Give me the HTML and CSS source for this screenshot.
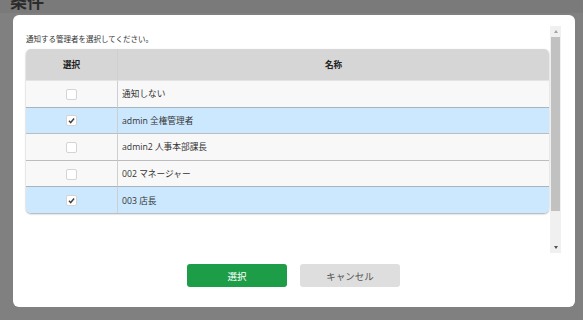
FILE: index.html
```html
<!DOCTYPE html>
<html>

<head>
    <title>通知先選択</title>
    <link rel="stylesheet" href="styles.css">
</head>

<body>
    <div class="page-header">
        <h2>条件</h2>
    </div>

    <div class="modal">
        <div class="scroll-area">
            <div class="scroll-content">
                <p class="lead">通知する管理者を選択してください。</p>
                <table class="admin-table">
                    <thead>
                        <tr>
                            <th class="col-check">選択</th>
                            <th>名称</th>
                        </tr>
                    </thead>
                    <tbody>
                        <tr>
                            <td class="col-check"><span class="checkbox"></span></td>
                            <td>通知しない</td>
                        </tr>
                        <tr class="selected">
                            <td class="col-check"><span class="checkbox checked"><svg viewBox="0 0 10 10"><path d="M2.2 5.4 L4.1 7.3 L7.9 2.8" /></svg></span></td>
                            <td>admin 全権管理者</td>
                        </tr>
                        <tr>
                            <td class="col-check"><span class="checkbox"></span></td>
                            <td>admin2 人事本部課長</td>
                        </tr>
                        <tr>
                            <td class="col-check"><span class="checkbox"></span></td>
                            <td>002 マネージャー</td>
                        </tr>
                        <tr class="selected">
                            <td class="col-check"><span class="checkbox checked"><svg viewBox="0 0 10 10"><path d="M2.2 5.4 L4.1 7.3 L7.9 2.8" /></svg></span></td>
                            <td>003 店長</td>
                        </tr>
                    </tbody>
                </table>
            </div>
            <div class="scrollbar">
                <span class="arrow up"></span>
                <span class="thumb"></span>
                <span class="arrow down"></span>
            </div>
        </div>

        <div class="actions">
            <button class="btn btn-primary">選択</button>
            <button class="btn btn-cancel">キャンセル</button>
        </div>
    </div>
</body>

</html>
```

FILE: styles.css
```css
:root {
    --overlay: #808080;
    --text-color: #333;
    --border-color: #bdbdbd;
    --row-bg: #f8f8f8;
    --row-selected: #cce8fe;
    --head-bg: #d5d6d5;
    --green: #1e9d49;
}

* {
    box-sizing: border-box;
    margin: 0;
    padding: 0;
}

body {
    width: 583px;
    height: 320px;
    overflow: hidden;
    background: var(--overlay);
    font-family: "Open Sans", "Noto Sans CJK JP", sans-serif;
    color: var(--text-color);
}

.page-header {
    height: 13px;
    overflow: hidden;
    background: #7a7a7a;
    padding-left: 10px;
}

.page-header h2 {
    font-family: "Noto Sans CJK JP", sans-serif;
    font-size: 17px;
    line-height: 17px;
    margin-top: -8px;
    color: #2b2b2b;
    font-weight: bold;
}

.modal {
    width: 562px;
    height: 292px;
    margin: 2px 0 0 13px;
    padding: 11px 14px 0 13px;
    background: #fff;
    border-radius: 6px;
}

.scroll-area {
    display: flex;
    height: 227px;
}

.scroll-content {
    flex: 1;
    padding-top: 7px;
}

.lead {
    font-size: 7.5px;
    line-height: 12px;
    color: #333;
    margin-bottom: 4px;
}

.admin-table {
    width: 523px;
    border-collapse: separate;
    border-spacing: 0;
    border-radius: 5px;
    overflow: hidden;
    box-shadow: 0 1px 2px rgba(0, 0, 0, 0.35);
    font-size: 8.7px;
}

.admin-table th {
    height: 31px;
    background: var(--head-bg);
    font-weight: bold;
    text-align: center;
    color: #222;
    font-size: 8.6px;
}

.admin-table td {
    height: 26.6px;
    background: var(--row-bg);
    border-top: 1px solid var(--border-color);
    padding-left: 4px;
    color: #333;
}

.admin-table .col-check {
    width: 92px;
    text-align: center;
    padding-left: 0;
    border-right: 1px solid #cfcfcf;
}

.admin-table tr.selected td {
    background: var(--row-selected);
    border-top-color: #a9b4bd;
}

.admin-table tbody tr:first-child td {
    border-top-color: #e4e4e4;
}

.checkbox {
    display: inline-block;
    vertical-align: middle;
    width: 11px;
    height: 11px;
    background: #fff;
    border: 1px solid #d4d4d4;
    border-radius: 2px;
}

.checkbox svg {
    display: block;
    width: 9px;
    height: 9px;
}

.checkbox svg path {
    fill: none;
    stroke: #444;
    stroke-width: 1.6;
}

.scrollbar {
    width: 11px;
    margin-left: 1px;
    background: #f0f0f0;
    display: flex;
    flex-direction: column;
    align-items: center;
}

.arrow {
    width: 0;
    height: 0;
    border-left: 2.5px solid transparent;
    border-right: 2.5px solid transparent;
    margin: 4px 0;
}

.arrow.up {
    border-bottom: 3px solid #a3a3a3;
}

.arrow.down {
    border-top: 3px solid #505050;
    margin-top: auto;
}

.thumb {
    width: 9px;
    height: 174px;
    background: #c1c1c1;
}

.actions {
    display: flex;
    justify-content: center;
    gap: 13px;
    margin-top: 11px;
}

.btn {
    width: 100px;
    height: 23px;
    border: none;
    border-radius: 3px;
    font-family: "Noto Sans CJK JP", sans-serif;
    font-size: 9.5px;
    cursor: pointer;
}

.btn-primary {
    background: var(--green);
    color: #fff;
}

.btn-cancel {
    background: #dedede;
    color: #555;
}
```
